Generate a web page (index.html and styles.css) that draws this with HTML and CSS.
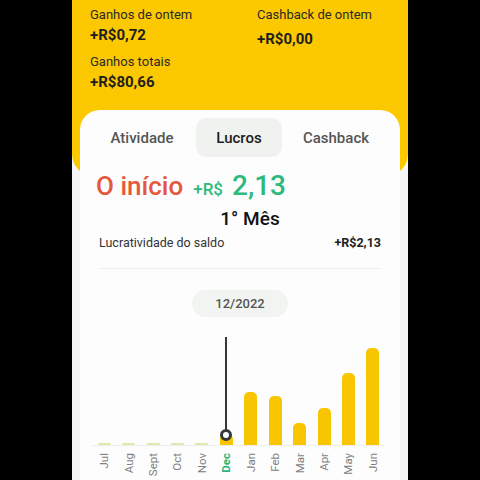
FILE: index.html
```html
<!DOCTYPE html>
<html lang="pt-BR">
<head>
  <meta charset="UTF-8">
  <meta name="viewport" content="width=device-width, initial-scale=1.0">
  <title>Lucros</title>
  <link rel="stylesheet" href="styles.css">
</head>
<body>
  <div class="screen">
    <header class="top">
      <div class="stats">
        <div class="stat">
          <span>Ganhos de ontem</span>
          <strong>+R$0,72</strong>
        </div>
        <div class="stat cash">
          <span>Cashback de ontem</span>
          <strong>+R$0,00</strong>
        </div>
        <div class="stat">
          <span>Ganhos totais</span>
          <strong>+R$80,66</strong>
        </div>
      </div>
    </header>

    <main class="card">
      <nav class="tabs">
        <button class="tab">Atividade</button>
        <button class="tab active">Lucros</button>
        <button class="tab">Cashback</button>
      </nav>

      <div class="headline">
        <span class="start">O início</span>
        <span class="plus">+R$</span>
        <span class="amount">2,13</span>
      </div>
      <div class="month">1° Mês</div>

      <div class="row">
        <span>Lucratividade do saldo</span>
        <strong>+R$2,13</strong>
      </div>
      <div class="divider"></div>

      <div class="period"><span>12/2022</span></div>

      <div class="chart">
        <div class="col"><div class="bars"><div class="bar empty"></div></div><span class="month-label">Jul</span></div>
        <div class="col"><div class="bars"><div class="bar empty"></div></div><span class="month-label">Aug</span></div>
        <div class="col"><div class="bars"><div class="bar empty"></div></div><span class="month-label">Sept</span></div>
        <div class="col"><div class="bars"><div class="bar empty"></div></div><span class="month-label">Oct</span></div>
        <div class="col"><div class="bars"><div class="bar empty"></div></div><span class="month-label">Nov</span></div>
        <div class="col current">
          <div class="bars">
            <div class="bar" style="height: 11px"></div>
            <div class="marker"><span class="dot"></span></div>
          </div>
          <span class="month-label">Dec</span>
        </div>
        <div class="col"><div class="bars"><div class="bar" style="height: 53px"></div></div><span class="month-label">Jan</span></div>
        <div class="col"><div class="bars"><div class="bar" style="height: 49px"></div></div><span class="month-label">Feb</span></div>
        <div class="col"><div class="bars"><div class="bar" style="height: 22px"></div></div><span class="month-label">Mar</span></div>
        <div class="col"><div class="bars"><div class="bar" style="height: 37px"></div></div><span class="month-label">Apr</span></div>
        <div class="col"><div class="bars"><div class="bar" style="height: 72px"></div></div><span class="month-label">May</span></div>
        <div class="col"><div class="bars"><div class="bar" style="height: 97px"></div></div><span class="month-label">Jun</span></div>
      </div>
    </main>
  </div>
</body>
</html>
```

FILE: styles.css
```css
body {
  margin: 0;
  background: #000;
  font-family: Roboto, "Liberation Sans", sans-serif;
  color: #222;
}
.screen {
  width: 336px;
  height: 480px;
  margin: 0 auto;
  background: #f5f6f5;
  overflow: hidden;
}
.top {
  background: #fcc800;
  height: 176px;
  box-sizing: border-box;
  padding: 6px 18px 0;
  border-radius: 0 0 22px 22px;
}
.stats {
  display: grid;
  grid-template-columns: 167px 1fr;
  row-gap: 4px;
}
.stat {
  display: flex;
  flex-direction: column;
  gap: 3px;
}
.stat span {
  font-size: 13px;
  line-height: 17px;
  color: #2a2a2a;
}
.stat strong {
  font-size: 15px;
  line-height: 19px;
  font-weight: 700;
  color: #1e1e1e;
}
.stat.cash strong {
  margin-top: 4px;
}
.card {
  margin: -66px 8px 0;
  height: 380px;
  background: #fdfdfd;
  border-radius: 20px 20px 0 0;
  padding: 8px 19px 0;
  box-sizing: border-box;
}
.tabs {
  display: grid;
  grid-template-columns: repeat(3, 97px);
  justify-content: center;
  margin-left: -2px;
}
.tab {
  justify-self: center;
  width: 86px;
  height: 39px;
  border: none;
  border-radius: 10px;
  background: transparent;
  font-family: inherit;
  font-size: 15px;
  font-weight: 500;
  color: #555;
  padding: 0;
}
.tab.active {
  background: #f0f2f0;
  color: #1c1c1c;
}
.headline {
  display: flex;
  align-items: baseline;
  margin: 12px 0 0 -3px;
  height: 36px;
}
.start {
  font-size: 26px;
  font-weight: 500;
  color: #e5583b;
}
.plus {
  margin-left: 10px;
  font-size: 17px;
  font-weight: 500;
  color: #30b97c;
}
.amount {
  margin-left: 9px;
  font-size: 28px;
  font-weight: 500;
  color: #30b97c;
}
.month {
  text-align: center;
  padding-left: 20px;
  margin-top: 3px;
  font-size: 19px;
  font-weight: 500;
  line-height: 22px;
  color: #111;
}
.row {
  display: flex;
  justify-content: space-between;
  margin-top: 4px;
  font-size: 12.5px;
  line-height: 18px;
  color: #333;
}
.row strong {
  font-weight: 700;
  color: #222;
}
.divider {
  height: 1px;
  background: #eeeeee;
  margin: 16px 0 0;
}
.period {
  display: flex;
  justify-content: center;
  margin-top: 21px;
}
.period span {
  width: 96px;
  height: 27px;
  line-height: 27px;
  text-align: center;
  border-radius: 14px;
  background: #f2f4f2;
  font-size: 13px;
  font-weight: 500;
  color: #555;
}
.chart {
  display: flex;
  margin: 20px -4px 0 -7px;
}
.col {
  flex: 1;
  display: flex;
  flex-direction: column;
  align-items: center;
}
.bars {
  position: relative;
  width: 100%;
  height: 108px;
  display: flex;
  align-items: flex-end;
  justify-content: center;
  border-bottom: 1px solid #eceeec;
}
.bar {
  width: 13px;
  background: #f8c600;
  border-radius: 5px 5px 0 0;
}
.bar.empty {
  height: 2px;
  border-radius: 1px;
  background: #e2e8ad;
}
.marker {
  position: absolute;
  left: 50%;
  top: 0;
  bottom: 10px;
  width: 2px;
  margin-left: -1px;
  background: #33383a;
}
.dot {
  position: absolute;
  left: 50%;
  bottom: -6px;
  width: 6px;
  height: 6px;
  margin-left: -6px;
  border: 3px solid #33383a;
  border-radius: 50%;
  background: #fff;
}
.month-label {
  margin-top: 7px;
  writing-mode: vertical-rl;
  transform: rotate(180deg);
  font-size: 11.5px;
  color: #808080;
}
.current .month-label {
  color: #2db37a;
  font-weight: 700;
}
```
